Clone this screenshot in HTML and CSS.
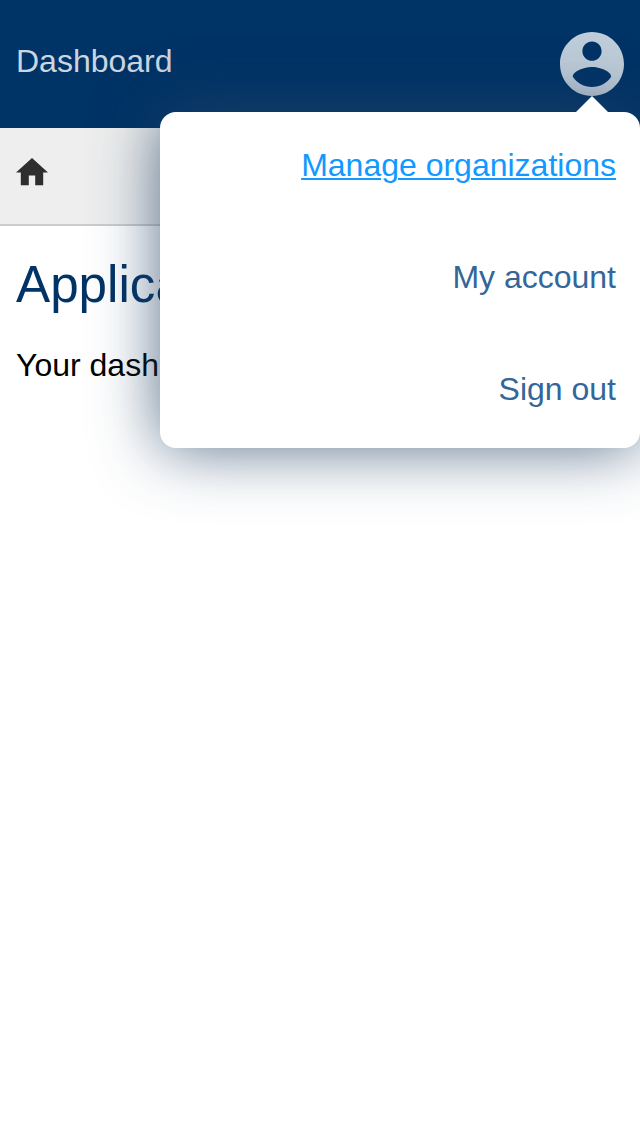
FILE: index.html
```html
<!DOCTYPE html>
<html lang="en">
<head>
<meta charset="utf-8">
<title>Dashboard</title>
<link rel="stylesheet" href="styles.css">
</head>
<body>
<header class="topbar">
  <span class="brand">Dashboard</span>
  <div class="account">
    <svg class="avatar" viewBox="2 2 20 20"><path d="M12 2C6.480 2 2 6.480 2 12s4.480 10 10 10 10-4.480 10-10S17.520 2 12 2zm0 3c1.660 0 3 1.340 3 3s-1.340 3-3 3-3-1.340-3-3 1.340-3 3-3zm0 14.200c-2.500 0-4.710-1.280-6-3.220.030-1.990 4-3.080 6-3.080 1.990 0 5.970 1.090 6 3.080-1.290 1.940-3.500 3.220-6 3.220z"/></svg>
    <nav class="menu">
      <a class="menu-item active">Manage organizations</a>
      <a class="menu-item">My account</a>
      <a class="menu-item">Sign out</a>
    </nav>
  </div>
</header>
<div class="breadcrumbs">
  <svg class="home" viewBox="2 3 20 17"><path d="M10 20v-6h4v6h5v-8h3L12 3 2 12h3v8z"/></svg>
</div>
<main class="content">
  <h1 class="title">Applications</h1>
  <p class="text">Your dashboard is empty.</p>
</main>
</body>
</html>
```
FILE: styles.css
```css
* { box-sizing: border-box; }
body {
  margin: 0;
  min-height: 1136px;
  background: #fff;
  color: #000;
  font: 32px/48px "Liberation Sans", Arial, sans-serif;
  overflow-x: hidden;
}
.topbar {
  display: flex;
  align-items: center;
  justify-content: space-between;
  height: 128px;
  padding: 0 16px;
  background: #003366;
}
.brand { color: #ccd6e0; margin-top: -6px; }
.account { position: relative; width: 64px; height: 64px; }
.avatar { display: block; width: 64px; height: 64px; fill: #bfccd9; }
.menu {
  position: absolute;
  z-index: 2;
  top: 80px;
  right: -16px;
  width: 480px;
  display: flex;
  flex-direction: column;
  border-radius: 16px;
  background: #fff;
  box-shadow: 0 0 64px rgba(34, 66, 100, 0.76);
}
.menu::before {
  content: "";
  position: absolute;
  top: -16px;
  right: 32px;
  border: 16px solid transparent;
  border-top: 0;
  border-bottom-color: #fff;
}
.menu-item {
  height: 112px;
  padding: 0 24px;
  line-height: 106px;
  text-align: right;
  color: #336699;
}
.active {
  color: #1199ff;
  text-decoration: underline;
  text-decoration-thickness: 2px;
  text-underline-offset: 2px;
}
.breadcrumbs {
  display: flex;
  height: 98px;
  padding: 30.4px 16px;
  background: #eee;
  border-bottom: 2px solid #ccc;
}
.home { width: 32px; height: 27.2px; fill: #2e2e2e; }
.content { padding: 20px 16px; white-space: nowrap; }
.title {
  margin: 0;
  font-size: 51.2px;
  font-weight: 400;
  line-height: 77px;
  color: #003366;
}
.text { margin: 18px 0 0; }
```
